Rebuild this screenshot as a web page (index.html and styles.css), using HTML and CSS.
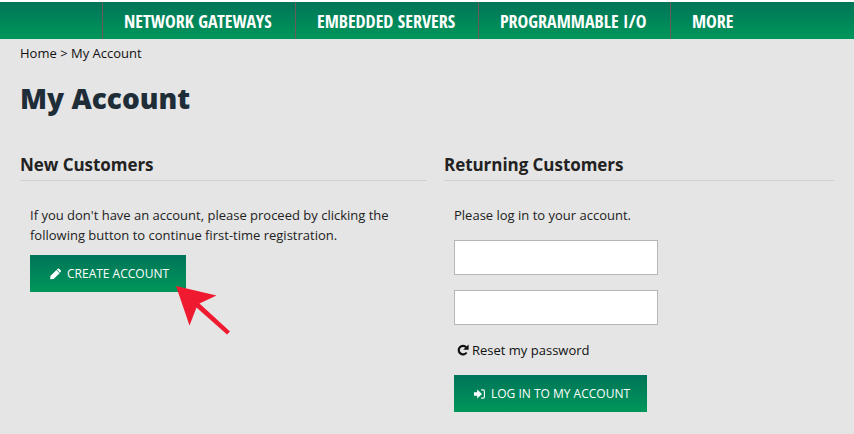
FILE: index.html
```html
<!DOCTYPE html>
<html lang="en">

<head>
    <meta charset="UTF-8">
    <meta name="viewport" content="width=device-width, initial-scale=1.0">
    <title>My Account</title>
    <link rel="stylesheet" href="styles.css">
</head>

<body>

    <nav class="navbar">
        <a class="nav-gateways" href="#"><span>NETWORK GATEWAYS</span></a>
        <a class="nav-servers" href="#"><span>EMBEDDED SERVERS</span></a>
        <a class="nav-io" href="#"><span>PROGRAMMABLE I/O</span></a>
        <a href="#"><span>MORE</span></a>
    </nav>

    <main class="content">
        <div class="breadcrumb"><a href="#">Home</a> &gt; <a href="#">My Account</a></div>
        <h1>My Account</h1>

        <div class="columns">
            <section class="column">
                <h2>New Customers</h2>
                <div class="panel">
                    <p>If you don't have an account, please proceed by clicking the<br>following button to continue first-time registration.</p>
                    <div class="create">
                        <a class="button button-create" href="#">
                            <svg class="icon" viewBox="0 0 12 12"><path d="M0.2 11.2 0.4 8 6.4 2 9.6 5.2 3.6 11ZM6.9 1.6 7.8.8Q8.6.2 9.4 1L10.8 2.4Q11.4 3.1 10.8 3.8L10 4.8Z" fill="#fff"/></svg>
                            <span>CREATE ACCOUNT</span>
                        </a>
                        <svg class="arrow" viewBox="0 0 56 52"><path d="M1 1 41.5 10.5 24.5 18.5 55 46.5 52 49.5 21.5 22.5 14.5 40.5Z" fill="#f01a30"/></svg>
                    </div>
                </div>
            </section>

            <section class="column">
                <h2>Returning Customers</h2>
                <form class="panel">
                    <p>Please log in to your account.</p>
                    <input type="text">
                    <input type="password">
                    <a class="reset" href="#">
                        <svg class="icon" viewBox="0 0 12 12"><path d="M9.2 3.2A4.3 4.3 0 1 0 9.6 8.5" fill="none" stroke="#111" stroke-width="2.2"/><path d="M11.6.4V5.8H6.2Z" fill="#111"/></svg>
                        <span>Reset my password</span>
                    </a>
                    <a class="button button-login" href="#">
                        <svg class="icon" viewBox="0 0 12 12"><path d="M0 4.2H3.2V1.5L8 6 3.2 10.5V7.8H0Z" fill="#fff"/><path d="M7.2 1.9H9.2Q10.4 1.9 10.4 3.1V8.9Q10.4 10.1 9.2 10.1H7.2" fill="none" stroke="#fff" stroke-width="1.1"/></svg>
                        <span>LOG IN TO MY ACCOUNT</span>
                    </a>
                </form>
            </section>
        </div>
    </main>

</body>

</html>
```
FILE: styles.css
```css
body {
    margin: 0;
    height: 434px;
    overflow: hidden;
    background-color: #e5e5e5;
    border-top: 2px solid #fff;
    box-sizing: border-box;
    font-family: "Open Sans", sans-serif;
    font-size: 13px;
    line-height: 20px;
    color: #222;
}

a {
    color: #111;
    text-decoration: none;
}

.navbar {
    display: flex;
    height: 37px;
    padding-left: 102px;
    background: linear-gradient(#007458, #00975a);
}

.navbar a {
    padding-left: 21px;
    border-left: 1px solid #6b5a58;
    color: #fff;
    font-family: "Open Sans Condensed", "Open Sans", sans-serif;
    font-size: 18px;
    font-weight: 700;
    font-stretch: 75%;
    line-height: 38px;
    white-space: nowrap;
    box-sizing: border-box;
}

.nav-gateways {
    width: 193px;
}

.nav-servers {
    width: 183px;
}

.nav-io {
    width: 192px;
}

.content {
    padding: 4px 20px 0;
}

.breadcrumb {
    color: #111;
}

h1 {
    margin: 15px 0 0;
    font-size: 28px;
    font-weight: 800;
    line-height: 40px;
    color: #1e2d38;
}

.columns {
    display: grid;
    grid-template-columns: 407px 390px;
    column-gap: 17px;
    margin-top: 34px;
}

h2 {
    margin: 0;
    height: 28px;
    border-bottom: 1px solid #d0d0d0;
    font-size: 17px;
    font-weight: 700;
    line-height: 26px;
    letter-spacing: -0.05px;
}

.panel {
    display: flex;
    flex-direction: column;
    align-items: flex-start;
    padding: 24px 10px 0;
}

p {
    margin: 0;
    white-space: nowrap;
}

.create {
    position: relative;
    margin-top: 10px;
}

.button {
    display: flex;
    align-items: center;
    height: 37px;
    padding-left: 20px;
    box-sizing: border-box;
    background: linear-gradient(#007458, #00975a);
    color: #fff;
    font-size: 12px;
    white-space: nowrap;
}

.button .icon {
    margin-right: 5px;
}

.button-create {
    width: 156px;
}

.button-login {
    width: 193px;
    margin-top: 15px;
}

.icon {
    width: 12px;
    height: 12px;
    flex: none;
}

/* pointer over the create button */
.arrow {
    position: absolute;
    left: 145px;
    top: 30px;
    width: 56px;
    height: 52px;
}

input {
    width: 204px;
    height: 35px;
    margin: 15px 0 0;
    padding: 0 8px;
    box-sizing: border-box;
    border: 1px solid #b5b5b5;
    background: #fff;
}

.reset {
    display: flex;
    align-items: center;
    gap: 3px;
    margin: 15px 0 0 3px;
}
```
